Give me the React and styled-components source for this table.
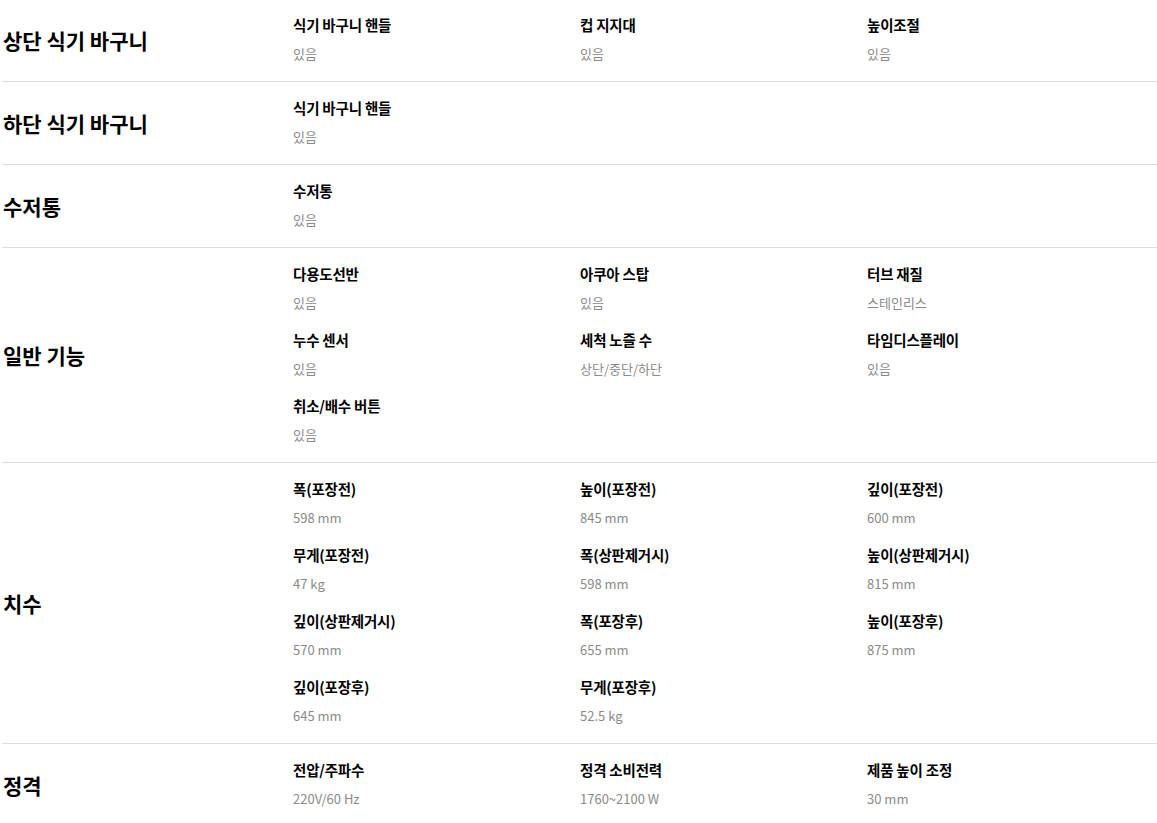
import styled, { createGlobalStyle } from "styled-components";

const GlobalStyle = createGlobalStyle`
  html, body {
    margin: 0;
    padding: 0;
    background: #fff;
  }
  body {
    font-family: "Noto Sans CJK KR", "Noto Sans", sans-serif;
    color: #000;
  }
`;

const specs = [
  {
    title: "상단 식기 바구니",
    items: [
      ["식기 바구니 핸들", "있음"],
      ["컵 지지대", "있음"],
      ["높이조절", "있음"],
    ],
  },
  {
    title: "하단 식기 바구니",
    items: [["식기 바구니 핸들", "있음"]],
  },
  {
    title: "수저통",
    items: [["수저통", "있음"]],
  },
  {
    title: "일반 기능",
    items: [
      ["다용도선반", "있음"],
      ["아쿠아 스탑", "있음"],
      ["터브 재질", "스테인리스"],
      ["누수 센서", "있음"],
      ["세척 노즐 수", "상단/중단/하단"],
      ["타임디스플레이", "있음"],
      ["취소/배수 버튼", "있음"],
    ],
  },
  {
    title: "치수",
    items: [
      ["폭(포장전)", "598 mm"],
      ["높이(포장전)", "845 mm"],
      ["깊이(포장전)", "600 mm"],
      ["무게(포장전)", "47 kg"],
      ["폭(상판제거시)", "598 mm"],
      ["높이(상판제거시)", "815 mm"],
      ["깊이(상판제거시)", "570 mm"],
      ["폭(포장후)", "655 mm"],
      ["높이(포장후)", "875 mm"],
      ["깊이(포장후)", "645 mm"],
      ["무게(포장후)", "52.5 kg"],
    ],
  },
  {
    title: "정격",
    items: [
      ["전압/주파수", "220V/60 Hz"],
      ["정격 소비전력", "1760~2100 W"],
      ["제품 높이 조정", "30 mm"],
    ],
  },
];

const SpecList = styled.div`
  width: 1155px;
  margin: -1px 0 0 2px;
`;

const SpecRow = styled.section`
  display: grid;
  grid-template-columns: 291px 1fr;
  padding: 16px 0 17px;
  border-bottom: 1px solid #dddddd;

  &:last-child {
    border-bottom: none;
  }
`;

const RowTitle = styled.h3`
  margin: 0 0 0 1px;
  align-self: center;
  font-size: 21px;
  font-weight: 700;
  letter-spacing: 0;
  line-height: 28px;
`;

const ItemGrid = styled.div`
  display: grid;
  grid-template-columns: repeat(3, 287px);
  row-gap: 17px;
`;

const Item = styled.div`
  display: flex;
  flex-direction: column;
`;

const Label = styled.span`
  font-size: 14.5px;
  font-weight: 700;
  line-height: 20px;
  color: #000;
  letter-spacing: -0.2px;
`;

const Value = styled.span`
  margin-top: 9px;
  font-size: 13px;
  line-height: 20px;
  color: #8a8a8a;
`;

export default function App() {
  return (
    <>
      <GlobalStyle />
      <SpecList>
        {specs.map((spec) => (
          <SpecRow key={spec.title}>
            <RowTitle>{spec.title}</RowTitle>
            <ItemGrid>
              {spec.items.map(([label, value]) => (
                <Item key={label}>
                  <Label>{label}</Label>
                  <Value>{value}</Value>
                </Item>
              ))}
            </ItemGrid>
          </SpecRow>
        ))}
      </SpecList>
    </>
  );
}
